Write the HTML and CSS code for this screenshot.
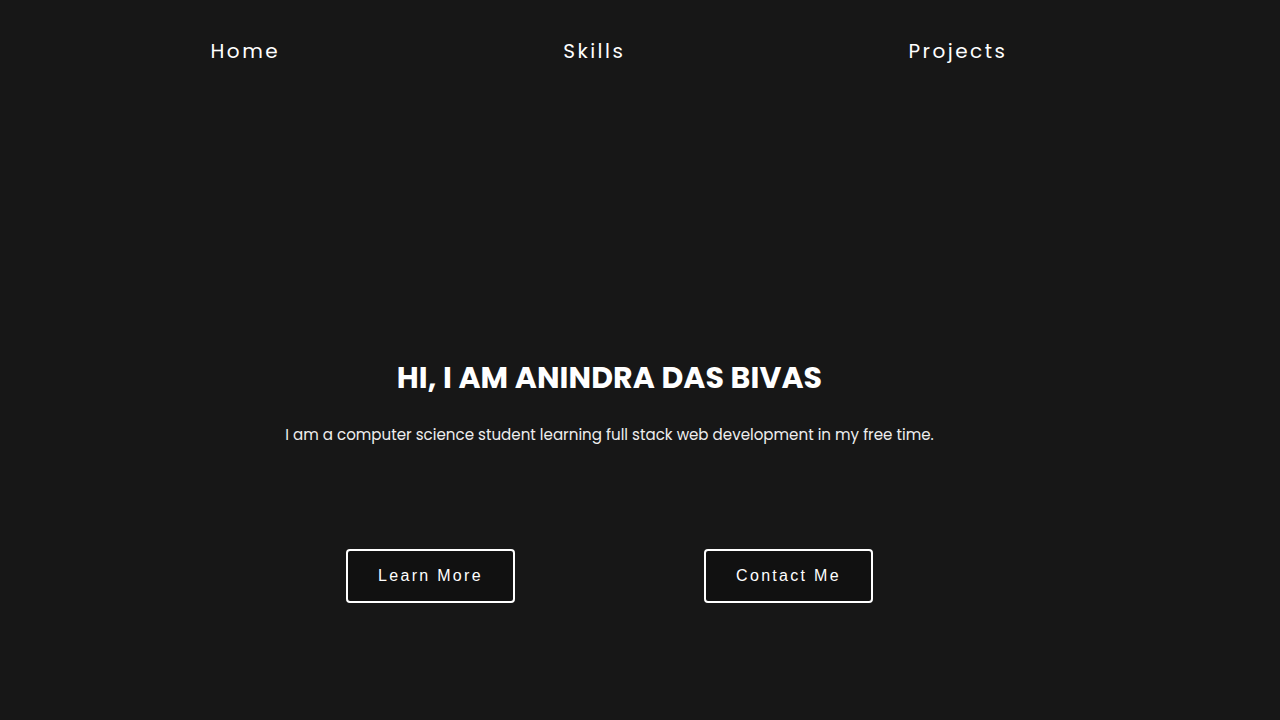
FILE: index.html
```html
<!DOCTYPE html>
<html lang="en">
<head>
<meta charset="utf-8">
<title>Anindra Das Bivas</title>
<link rel="stylesheet" href="styles.css">
</head>
<body>
<header class="nav">
  <ul class="nav-list">
    <li><a class="nav-link" href="#">Home</a></li>
    <li><a class="nav-link" href="#">Skills</a></li>
    <li><a class="nav-link" href="#">Projects</a></li>
  </ul>
</header>
<main class="hero">
  <h1 class="hero-title">HI, I AM ANINDRA DAS BIVAS</h1>
  <p class="hero-text">I am a computer science student learning full stack web development in my free time.</p>
  <div class="hero-actions">
    <a class="btn" href="#">Learn More</a>
    <a class="btn" href="#">Contact Me</a>
  </div>
</main>
</body>
</html>
```
FILE: styles.css
```css
html, body {
  margin: 0;
  padding: 0;
  background: #171717;
  color: #ffffff;
  font-family: "Poppins", "Open Sans", sans-serif;
}
body {
  width: 1280px;
  height: 720px;
  overflow: hidden;
}
.nav {
  padding: 33px 131px 0 69px;
}
.nav-list {
  list-style: none;
  margin: 0;
  padding: 0;
  display: flex;
  justify-content: space-around;
}
.nav-link {
  color: #ffffff;
  text-decoration: none;
  font-size: 20px;
  letter-spacing: 2.5px;
  line-height: 36px;
}
.hero {
  display: flex;
  flex-direction: column;
  align-items: center;
  padding: 0 61px 0 0;
  margin-top: 289px;
}
.hero-title {
  margin: 0;
  font-size: 30px;
  font-weight: 700;
  line-height: 40px;
  letter-spacing: 0.1px;
}
.hero-text {
  margin: 25px 0 0;
  font-size: 15.1px;
  line-height: 24px;
  color: #eeeeee;
}
.hero-actions {
  display: flex;
  gap: 189px;
  margin-top: 102px;
}
.btn {
  box-sizing: border-box;
  width: 169px;
  height: 54px;
  display: flex;
  align-items: center;
  justify-content: center;
  border: 2px solid #ffffff;
  border-radius: 4px;
  background: #111111;
  color: #ffffff;
  text-decoration: none;
  font-family: "Liberation Sans", Arial, sans-serif;
  font-size: 16px;
  letter-spacing: 2.3px;
}
```
